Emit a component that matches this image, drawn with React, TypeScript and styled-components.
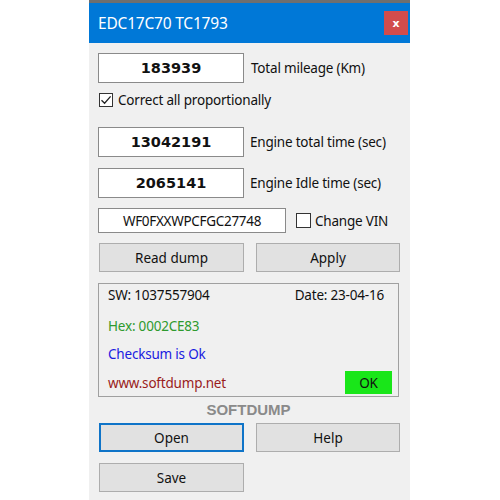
import React from "react";
import styled, { createGlobalStyle } from "styled-components";

const Global = createGlobalStyle`
  html, body { margin: 0; padding: 0; background: #ffffff; }
  body { font-family: "Noto Sans", "Open Sans", sans-serif; }
`;

const Window = styled.div`
  width: 321px;
  height: 500px;
  margin-left: 89px;
  background: #f0f0f0;
  display: flex;
  flex-direction: column;
  box-sizing: border-box;
`;

const TitleBar = styled.div`
  height: 40px;
  border-top: 3px solid #6f6f6f;
  background: #0078d7;
  display: flex;
  align-items: center;
  justify-content: space-between;
  padding: 0 2px 0 9px;
`;

const Title = styled.span`
  color: #ffffff;
  font-size: 15.5px;
  letter-spacing: -0.2px;
`;

const CloseBtn = styled.div`
  width: 24px;
  height: 24px;
  background: #d24c4c;
  color: #ffffff;
  font-family: "DejaVu Sans", sans-serif;
  font-weight: bold;
  font-size: 11px;
  display: flex;
  align-items: center;
  justify-content: center;
`;

const Body = styled.div`
  display: flex;
  flex-direction: column;
  padding: 10px 11px 0 9px;
`;

const Row = styled.div<{ $top: number }>`
  display: flex;
  align-items: center;
  margin-top: ${(p) => p.$top}px;
`;

const NumberBox = styled.div`
  width: 146px;
  height: 30px;
  box-sizing: border-box;
  background: #ffffff;
  border: 1px solid #8a8a8a;
  display: flex;
  align-items: center;
  justify-content: center;
  font-family: "DejaVu Sans", Verdana, sans-serif;
  font-weight: bold;
  font-size: 14.5px;
  color: #111;
`;

const VinBox = styled.div`
  width: 188px;
  height: 25px;
  box-sizing: border-box;
  background: #ffffff;
  border: 1px solid #8a8a8a;
  display: flex;
  align-items: center;
  justify-content: center;
  font-size: 13.5px;
  letter-spacing: -0.3px;
  color: #111;
`;

const Label = styled.span<{ $gap: number }>`
  margin-left: ${(p) => p.$gap}px;
  font-size: 13.5px;
  line-height: 14px;
  letter-spacing: -0.2px;
  color: #111;
`;

const Check = styled.div<{ $size: number; $indent: number }>`
  width: ${(p) => p.$size}px;
  height: ${(p) => p.$size}px;
  margin-left: ${(p) => p.$indent}px;
  box-sizing: border-box;
  border: 1px solid #333;
  background: #ffffff;
  display: flex;
  align-items: center;
  justify-content: center;
`;

const ButtonRow = styled.div<{ $top: number }>`
  display: grid;
  grid-template-columns: 145px 144px;
  column-gap: 12px;
  margin-top: ${(p) => p.$top}px;
  padding-left: 1px;
`;

const Button = styled.div<{ $focused?: boolean }>`
  height: 29px;
  box-sizing: border-box;
  background: #e1e1e1;
  border: ${(p) => (p.$focused ? "2px solid #0f74c8" : "1px solid #adadad")};
  display: flex;
  align-items: center;
  justify-content: center;
  font-size: 13.5px;
  color: #111;
`;

const Panel = styled.div`
  margin-top: 11px;
  width: 301px;
  height: 114px;
  box-sizing: border-box;
  border: 1px solid #a0a0a0;
  display: flex;
  flex-direction: column;
  padding: 1px 6px 0 9px;
  font-size: 13.5px;
  letter-spacing: -0.2px;
`;

const PanelLine = styled.div<{ $color: string; $top: number; $h?: number }>`
  height: ${(p) => p.$h ?? 20}px;
  margin-top: ${(p) => p.$top}px;
  display: flex;
  align-items: center;
  justify-content: space-between;
  color: ${(p) => p.$color};
`;

const DateText = styled.span`
  margin-right: 8px;
`;

const OkBadge = styled.div`
  width: 47px;
  height: 23px;
  background: #19e619;
  color: #111;
  display: flex;
  align-items: center;
  justify-content: center;
`;

const Brand = styled.div`
  height: 24px;
  display: flex;
  align-items: center;
  justify-content: center;
  font-family: "Liberation Sans", Arial, sans-serif;
  font-weight: bold;
  font-size: 15px;
  color: #8a8a8a;
`;

const CheckMark = () => (
  <svg width="12" height="12" viewBox="0 0 12 12">
    <path d="M1.5 6.2 L4.6 9.3 L10.6 2.4" fill="none" stroke="#222" strokeWidth="1.3" />
  </svg>
);

export default function App() {
  return (
    <>
      <Global />
      <Window>
        <TitleBar>
          <Title>EDC17C70 TC1793</Title>
          <CloseBtn>x</CloseBtn>
        </TitleBar>
        <Body>
          <Row $top={0}>
            <NumberBox>183939</NumberBox>
            <Label $gap={7}>Total mileage (Km)</Label>
          </Row>
          <Row $top={10}>
            <Check $size={14} $indent={1}>
              <CheckMark />
            </Check>
            <Label $gap={5}>Correct all proportionally</Label>
          </Row>
          <Row $top={20}>
            <NumberBox>13042191</NumberBox>
            <Label $gap={6}>Engine total time (sec)</Label>
          </Row>
          <Row $top={11}>
            <NumberBox>2065141</NumberBox>
            <Label $gap={6}>Engine Idle time (sec)</Label>
          </Row>
          <Row $top={10}>
            <VinBox>WF0FXXWPCFGC27748</VinBox>
            <Check $size={15} $indent={10} />
            <Label $gap={4}>Change VIN</Label>
          </Row>
          <ButtonRow $top={10}>
            <Button>Read dump</Button>
            <Button>Apply</Button>
          </ButtonRow>
          <Panel>
            <PanelLine $color="#111" $top={0}>
              <span>SW: 1037557904</span>
              <DateText>Date: 23-04-16</DateText>
            </PanelLine>
            <PanelLine $color="#2e9a2e" $top={11}>Hex: 0002CE83</PanelLine>
            <PanelLine $color="#1a1ae0" $top={8}>Checksum is Ok</PanelLine>
            <PanelLine $color="#9a1c1c" $top={7} $h={23}>
              <span>www.softdump.net</span>
              <OkBadge>OK</OkBadge>
            </PanelLine>
          </Panel>
          <Brand>SOFTDUMP</Brand>
          <ButtonRow $top={2}>
            <Button $focused>Open</Button>
            <Button>Help</Button>
          </ButtonRow>
          <ButtonRow $top={11}>
            <Button>Save</Button>
          </ButtonRow>
        </Body>
      </Window>
    </>
  );
}
